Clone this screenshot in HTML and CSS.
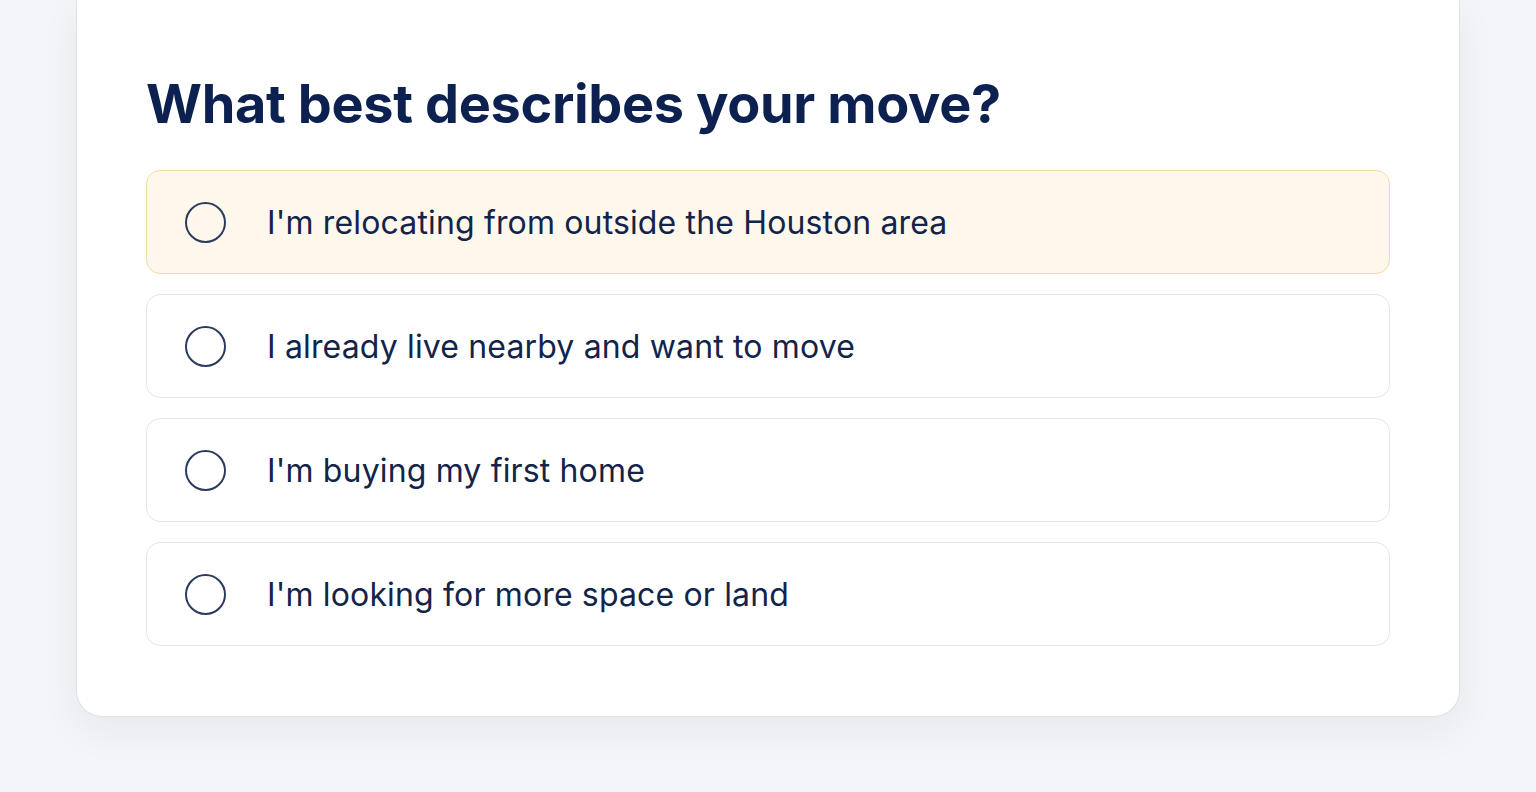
FILE: index.html
```html
<!DOCTYPE html>
<html lang="en">

<head>
  <meta charset="UTF-8" />
  <meta name="viewport" content="width=device-width, initial-scale=1.0" />
  <title>Move Quiz</title>
  <link rel="stylesheet" href="styles.css">
</head>

<body>
  <div class="page">
    <div class="card">
      <h1 class="question">What best describes your move?</h1>
      <div class="options">
        <label class="option option-active">
          <span class="radio"></span>
          <span class="option-text">I'm relocating from outside the Houston area</span>
        </label>
        <label class="option">
          <span class="radio"></span>
          <span class="option-text">I already live nearby and want to move</span>
        </label>
        <label class="option">
          <span class="radio"></span>
          <span class="option-text">I'm buying my first home</span>
        </label>
        <label class="option">
          <span class="radio"></span>
          <span class="option-text">I'm looking for more space or land</span>
        </label>
      </div>
    </div>
  </div>
</body>

</html>
```

FILE: styles.css
```css
body {
  margin: 0;
  padding: 0;
  font-family: Inter, "Noto Sans", Arial, sans-serif;
  background-color: #f4f5f8;
  height: 100vh;
  overflow: hidden;
}

.page {
  padding: 0 76px;
}

.card {
  background-color: #ffffff;
  border: 1px solid #dde1e8;
  border-top: 0;
  border-radius: 0 0 26px 26px;
  padding: 72px 69px 70px;
  box-shadow: 0 14px 40px rgba(20, 30, 60, 0.06);
}

.question {
  margin: 0 0 34px;
  font-size: 54px;
  font-weight: 700;
  line-height: 64px;
  color: #0c2150;
  letter-spacing: -0.35px;
}

.options {
  display: flex;
  flex-direction: column;
  gap: 20px;
}

.option {
  display: flex;
  align-items: center;
  height: 102px;
  padding: 0 38px;
  border: 1px solid #e1e4ea;
  border-radius: 14px;
  cursor: pointer;
  background-color: #ffffff;
}

.option-active {
  background-color: #fef7ec;
  border-color: #f5dba6;
}

.radio {
  width: 37px;
  height: 37px;
  border: 2.8px solid #2b3b5e;
  border-radius: 50%;
  flex-shrink: 0;
  margin-right: 41px;
}

.option-text {
  font-size: 32px;
  color: #13244a;
  letter-spacing: 0.15px;
}
```
